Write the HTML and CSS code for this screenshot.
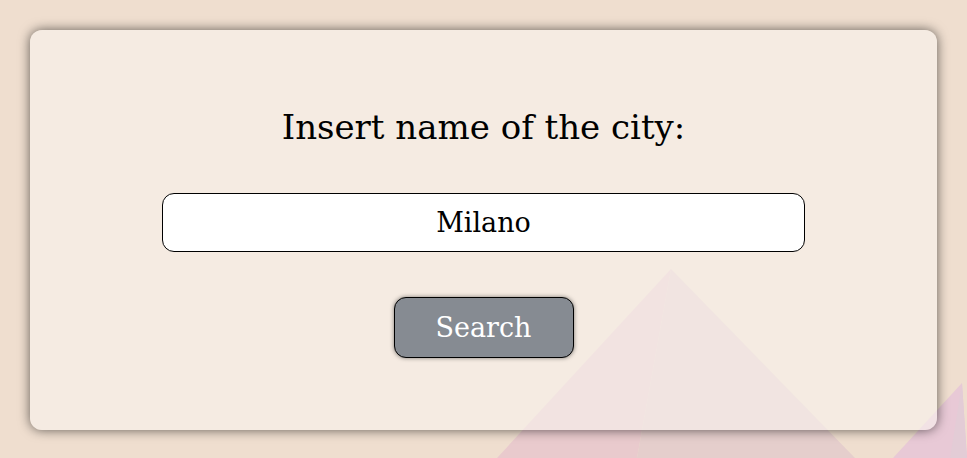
FILE: index.html
```html
<!DOCTYPE html>
<html>
<head>
<meta charset="utf-8">
<link rel="stylesheet" href="styles.css">
</head>
<body>
<svg class="bg" width="967" height="458" viewBox="0 0 967 458">
  <polygon points="671,269 497,458 637,458" fill="#e9cacd"/>
  <polygon points="671,269 637,458 855,458" fill="#e5cecc"/>
  <polygon points="962,383 893,458 967,458" fill="#e8c9d6"/>
  <polygon points="962,383 950,458 967,458" fill="#e3ccd6"/>
</svg>
<main class="card">
  <h1 class="title">Insert name of the city:</h1>
  <input class="city" type="text" value="Milano">
  <button class="search">Search</button>
</main>
</body>
</html>
```
FILE: styles.css
```css
html, body {
  margin: 0;
  padding: 0;
}
body {
  background: #efdecf;
  width: 967px;
  height: 458px;
  overflow: hidden;
  position: relative;
  font-family: "DejaVu Serif", serif;
  padding: 30px;
  box-sizing: border-box;
}
.bg {
  position: absolute;
  left: 0;
  top: 0;
}
.card {
  position: relative;
  height: 400px;
  border-radius: 12px;
  background: rgba(249, 244, 239, 0.6);
  box-shadow: 0 0 12px rgba(0, 0, 0, 0.6);
  display: flex;
  flex-direction: column;
  align-items: center;
  box-sizing: border-box;
  padding-top: 73px;
}
.title {
  margin: 0;
  font-weight: normal;
  font-size: 34px;
  line-height: 48px;
  color: #000;
}
.city {
  margin-top: 42px;
  width: 643px;
  height: 59px;
  box-sizing: border-box;
  border: 1px solid #000;
  border-radius: 12px;
  background: #fff;
  text-align: center;
  font-family: "DejaVu Serif", serif;
  font-size: 27px;
  color: #000;
  outline: none;
  padding: 0;
}
.search {
  margin-top: 45px;
  width: 180px;
  height: 61px;
  box-sizing: border-box;
  border: 1px solid #000;
  border-radius: 12px;
  background: #868b92;
  color: #fff;
  font-family: "DejaVu Serif", serif;
  font-size: 27px;
  box-shadow: 0 0 4px rgba(0, 0, 0, 0.5);
  padding: 0;
}
```
